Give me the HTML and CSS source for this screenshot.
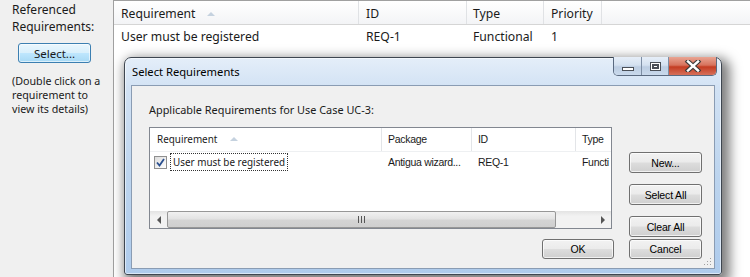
FILE: index.html
```html
<!DOCTYPE html>
<html>
<head>
<meta charset="utf-8">
<link rel="stylesheet" href="styles.css">
</head>
<body>
<div class="app">
  <aside class="side">
    <div class="side-label">Referenced<br>Requirements:</div>
    <button class="btn-hover">Select...</button>
    <div class="side-hint">(Double click on a<br>requirement to<br>view its details)</div>
  </aside>
  <section class="grid">
    <div class="grid-head">
      <div class="gh">Requirement <span class="sort"></span></div>
      <div class="gh">ID</div>
      <div class="gh">Type</div>
      <div class="gh">Priority</div>
      <div class="gh gh-fill"></div>
    </div>
    <div class="grid-row">
      <div class="gc">User must be registered</div>
      <div class="gc">REQ-1</div>
      <div class="gc">Functional</div>
      <div class="gc">1</div>
      <div class="gc"></div>
    </div>
  </section>

  <div class="dialog">
    <div class="titlebar">
      <span class="title">Select Requirements</span>
      <div class="caps">
        <div class="cap cap-min"><span class="min-bar"></span></div>
        <div class="cap cap-max"><span class="max-box"></span></div>
        <div class="cap cap-close">
          <svg width="18" height="12" viewBox="0 0 18 12">
            <path d="M4 1.5 L14 10.5 M14 1.5 L4 10.5" stroke="#3b3b3b" stroke-width="4.6" stroke-linecap="square"/>
            <path d="M4 1.5 L14 10.5 M14 1.5 L4 10.5" stroke="#ffffff" stroke-width="2.4" stroke-linecap="square"/>
          </svg>
        </div>
      </div>
    </div>
    <div class="client">
      <div class="dlg-label">Applicable Requirements for Use Case UC-3:</div>
      <div class="dlg-body">
        <div class="list">
          <div class="list-head">
            <div class="lh lh-req">Requirement <span class="sort sort-l"></span></div>
            <div class="lh lh-ms">Package</div>
            <div class="lh lh-ms">ID</div>
            <div class="lh lh-ms">Type</div>
          </div>
          <div class="list-row">
            <div class="lc lc-req">
              <span class="chk">
                <svg width="9" height="9" viewBox="0 0 9 9"><path d="M1 4.5 L3.5 7.5 L8 1" fill="none" stroke="#2a4f8f" stroke-width="1.8"/></svg>
              </span>
              <span class="focus">User must be registered</span>
            </div>
            <div class="lc lc-ms">Antigua wizard...</div>
            <div class="lc lc-ms">REQ-1</div>
            <div class="lc lc-ms">Functi</div>
          </div>
          <div class="hscroll">
            <div class="sb-arrow"><span class="tri-l"></span></div>
            <div class="thumb"><span class="grip"><i></i><i></i><i></i></span></div>
            <div class="sb-track"></div>
            <div class="sb-arrow"><span class="tri-r"></span></div>
          </div>
        </div>
        <div class="btn-col">
          <button class="btn">New...</button>
          <button class="btn">Select All</button>
          <button class="btn">Clear All</button>
        </div>
      </div>
      <div class="dlg-foot">
        <button class="btn btn-ok">OK</button>
        <button class="btn">Cancel</button>
      </div>
      <div class="grip-corner">
        <svg width="8" height="8" viewBox="0 0 8 8">
          <rect x="6" y="0" width="1" height="1" fill="#a0a0a0"/>
          <rect x="3" y="3" width="1" height="1" fill="#a0a0a0"/>
          <rect x="6" y="3" width="1" height="1" fill="#a0a0a0"/>
          <rect x="0" y="6" width="1" height="1" fill="#a0a0a0"/>
          <rect x="3" y="6" width="1" height="1" fill="#a0a0a0"/>
          <rect x="6" y="6" width="1" height="1" fill="#a0a0a0"/>
        </svg>
      </div>
    </div>
  </div>
</div>
</body>
</html>
```

FILE: styles.css
```css
* { box-sizing: border-box; }
html, body { margin: 0; padding: 0; }
body {
  width: 750px;
  height: 277px;
  overflow: hidden;
  background: #f0f0f0;
  font-family: "Noto Sans", "Open Sans", sans-serif;
  font-size: 12px;
  color: #1a1a1a;
}
.app {
  position: relative;
  display: flex;
  height: 277px;
}
.side {
  width: 113px;
  flex: none;
  padding: 1px 0 0 12px;
  display: flex;
  flex-direction: column;
  align-items: flex-start;
}
.side-label { line-height: 17px; font-size: 12px; }
.btn-hover {
  margin: 8px 0 0 6px;
  width: 73px;
  height: 20px;
  border: 1px solid #3c7fb1;
  border-radius: 3px;
  background: linear-gradient(#eaf6fd, #d9f0fc 48%, #bee6fd 52%, #a7d9f5);
  font-family: inherit;
  font-size: 11.5px;
  color: #1a1a1a;
  padding: 0;
  box-shadow: inset 0 0 0 1px rgba(255,255,255,0.6);
}
.side-hint { margin-top: 11px; line-height: 14px; font-size: 10.7px; }

.grid {
  flex: 1;
  background: #fff;
  border-left: 1px solid #a0a0a0;
  border-top: 1px solid #a0a0a0;
  font-size: 12.2px;
}
.grid-head, .grid-row {
  display: grid;
  grid-template-columns: 245px 108px 77px 58px 1fr;
}
.grid-head {
  height: 24px;
  background: linear-gradient(#ffffff, #f3f4f6);
  border-bottom: 1px solid #d5d5d5;
}
.gh {
  border-right: 1px solid #e0e2e5;
  padding: 2px 0 0 7px;
  line-height: 21px;
  white-space: nowrap;
}
.gh:nth-child(3) { padding-left: 6px; }
.gh-fill { border-right: none; }
.grid-row { height: 24px; }
.gc { padding-left: 7px; line-height: 24px; white-space: nowrap; }
.gc:nth-child(3) { padding-left: 6px; }
.sort {
  display: inline-block;
  width: 0; height: 0;
  border-left: 4px solid transparent;
  border-right: 4px solid transparent;
  border-bottom: 4px solid #c5d2df;
  margin-left: 8px;
  vertical-align: 2px;
}
.sort-l { margin-left: 10px; }

/* dialog */
.dialog {
  position: absolute;
  left: 124px;
  top: 57px;
  width: 598px;
  height: 218px;
  border: 1px solid #3e4650;
  border-radius: 7px 7px 3px 3px;
  background: linear-gradient(#e4eef9, #d2e2f4 30px, #bcd4ee 120px, #aecbec);
  box-shadow: 4px 5px 12px 4px rgba(0,0,0,0.5), inset 0 0 0 1px rgba(255,255,255,0.55);
  display: flex;
  flex-direction: column;
}
.titlebar {
  height: 27px;
  display: flex;
  align-items: flex-start;
  justify-content: space-between;
  padding-left: 7px;
}
.title { font-size: 11.2px; line-height: 16px; margin-top: 6px; color: #000; }
.caps {
  display: flex;
  margin-right: 4px;
  height: 19px;
  margin-top: -1px;
  border: 1px solid #5a6a80;
  border-top: none;
  border-radius: 0 0 5px 5px;
  overflow: hidden;
}
.cap {
  height: 100%;
  display: flex;
  align-items: center;
  justify-content: center;
}
.cap-min, .cap-max {
  width: 27px;
  background: linear-gradient(#e6eef8, #d4e1f0 45%, #bccde2 55%, #c9d9ec);
  border-right: 1px solid #7d8ea4;
}
.cap-min { width: 28px; }
.cap-close {
  width: 47px;
  background: linear-gradient(#e9a593, #d7735d 45%, #c43c22 55%, #d6705a);
}
.min-bar {
  width: 12px; height: 4px;
  background: #fff;
  border: 1px solid #4a4f57;
  margin-top: 6px;
}
.max-box {
  width: 11px; height: 9px;
  border: 1px solid #4a4f57;
  background: #fff;
  box-shadow: inset 0 0 0 1px #fff, inset 0 0 0 3px #4a4f57;
}
.client {
  position: relative;
  margin: 0 6px;
  height: 184px;
  background: #f0f0f0;
  border: 1px solid #8a9cb3;
  padding: 16px 12px 0 17px;
  display: flex;
  flex-direction: column;
}
.dlg-label { line-height: 16px; font-size: 10.9px; }
.dlg-body {
  margin-top: 9px;
  height: 110px;
  display: flex;
  justify-content: space-between;
  align-items: flex-start;
}
.list {
  width: 463px;
  height: 102px;
  background: #fff;
  border: 1px solid #828790;
  display: flex;
  flex-direction: column;
  overflow: hidden;
  font-size: 9.9px;
}
.list-head, .list-row {
  display: grid;
  grid-template-columns: 232px 90px 104px 40px;
}
.list-head { height: 24px; border-bottom: 1px solid #eef0f2; }
.lh {
  line-height: 23px;
  padding-left: 6px;
  border-right: 1px solid #e3e5e8;
  white-space: nowrap;
  overflow: hidden;
}
.lh-req { padding-left: 7px; }
.lh-ms, .lc-ms {
  font-family: "Liberation Sans", Arial, sans-serif;
  font-size: 10.5px;
  letter-spacing: -0.3px;
}
.list-row { height: 18px; margin-top: 1px; }
.lc { line-height: 18px; white-space: nowrap; overflow: hidden; padding-left: 6px; }
.lc-req { display: flex; align-items: center; padding-left: 4px; }
.chk {
  width: 13px; height: 13px;
  border: 1px solid #8f8f8f;
  background: linear-gradient(135deg, #dcdcdc, #ffffff);
  display: flex; align-items: center; justify-content: center;
  flex: none;
}
.focus {
  margin-left: 3px;
  border: 1px dotted #333;
  padding: 0 2px 0 2px;
  line-height: 16px;
}
.hscroll {
  margin-top: auto;
  height: 17px;
  display: flex;
  background: linear-gradient(#e3e3e3, #f2f2f2 30%, #f2f2f2);
}
.sb-arrow {
  width: 17px; flex: none;
  display: flex; align-items: center; justify-content: center;
}
.tri-l, .tri-r { width: 0; height: 0; border-top: 4px solid transparent; border-bottom: 4px solid transparent; }
.tri-l { border-right: 4px solid #555; }
.tri-r { border-left: 4px solid #555; }
.thumb {
  width: 389px; flex: none;
  border: 1px solid #979797;
  border-radius: 2px;
  background: linear-gradient(#f1f1f1, #e3e3e3 45%, #d4d4d4 55%, #cfcfcf);
  display: flex; align-items: center; justify-content: center;
}
.grip { display: flex; gap: 2px; }
.grip i { display: block; width: 1px; height: 7px; background: #555; }
.sb-track { flex: 1; }
.btn-col {
  width: 73px;
  padding-top: 25px;
  display: flex;
  flex-direction: column;
  gap: 11px;
}
.btn {
  width: 73px;
  height: 21px;
  border: 1px solid #707070;
  border-radius: 3px;
  background: linear-gradient(#f2f2f2, #ebebeb 48%, #dddddd 52%, #cfcfcf);
  box-shadow: inset 0 0 0 1px rgba(255,255,255,0.7);
  font-family: "Liberation Sans", Arial, sans-serif;
  font-size: 10.5px;
  letter-spacing: -0.15px;
  color: #000;
  padding: 0;
}
.dlg-foot {
  margin-top: 2px;
  display: flex;
  justify-content: flex-end;
}
.dlg-foot .btn { height: 20px; }
.btn-ok { width: 72px; margin-right: 15px; }
.grip-corner {
  position: absolute;
  right: 2px;
  bottom: 2px;
  width: 8px; height: 8px;
  display: flex;
}
```
